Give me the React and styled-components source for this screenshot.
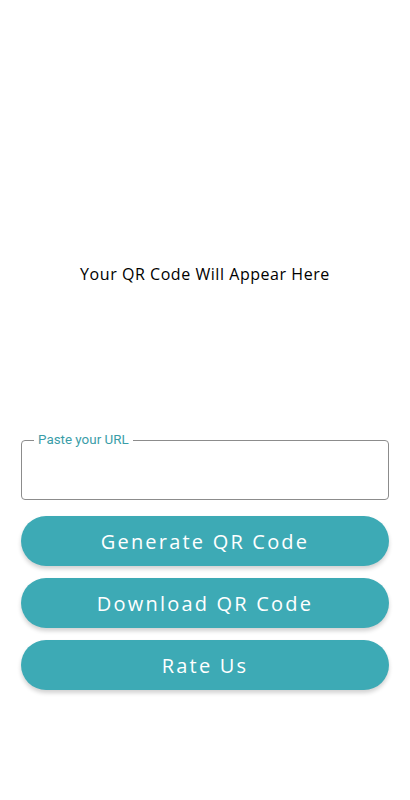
import React from "react";
import styled, { createGlobalStyle } from "styled-components";

const Global = createGlobalStyle`
  html, body { margin: 0; padding: 0; background: #ffffff; }
  body { font-family: "Open Sans", "Liberation Sans", sans-serif; }
`;

const Screen = styled.div`
  width: 410px;
  height: 800px;
  display: flex;
  flex-direction: column;
  background: #fff;
`;

const Preview = styled.div`
  height: 433px;
  display: flex;
  justify-content: center;
  align-items: flex-start;
  padding-top: 263px;
  box-sizing: border-box;
`;

const Placeholder = styled.p`
  margin: 0;
  font-family: "Open Sans", sans-serif;
  font-size: 16px;
  color: #000;
  letter-spacing: 0.55px;
  line-height: 22px;
`;

const Controls = styled.div`
  display: flex;
  flex-direction: column;
  gap: 12px;
  padding: 0 21px;
`;

const Field = styled.fieldset`
  margin: 0 0 4px 0;
  padding: 0 12px;
  height: 67px;
  box-sizing: border-box;
  border: 1px solid #8c8c8c;
  border-radius: 4px;
`;

const Legend = styled.legend`
  padding: 0 4px;
  margin-left: 0;
  font-family: Roboto, sans-serif;
  font-size: 13.4px;
  color: #3a9da8;
  line-height: 14px;
`;

const Input = styled.input`
  width: 100%;
  border: none;
  outline: none;
  background: transparent;
  font-family: Roboto, sans-serif;
  font-size: 16px;
  height: 40px;
  padding: 0;
`;

const Button = styled.button`
  height: 50px;
  border: none;
  border-radius: 25px;
  background: #3daab5;
  color: #fff;
  font-family: "Open Sans", sans-serif;
  font-size: 20px;
  letter-spacing: 2.2px;
  box-shadow: 0 3px 4px rgba(0, 0, 0, 0.18);
  cursor: pointer;
`;

export default function App() {
  return (
    <Screen>
      <Global />
      <Preview>
        <Placeholder>Your QR Code Will Appear Here</Placeholder>
      </Preview>
      <Controls>
        <Field>
          <Legend>Paste your URL</Legend>
          <Input type="text" />
        </Field>
        <Button>Generate QR Code</Button>
        <Button>Download QR Code</Button>
        <Button>Rate Us</Button>
      </Controls>
    </Screen>
  );
}
